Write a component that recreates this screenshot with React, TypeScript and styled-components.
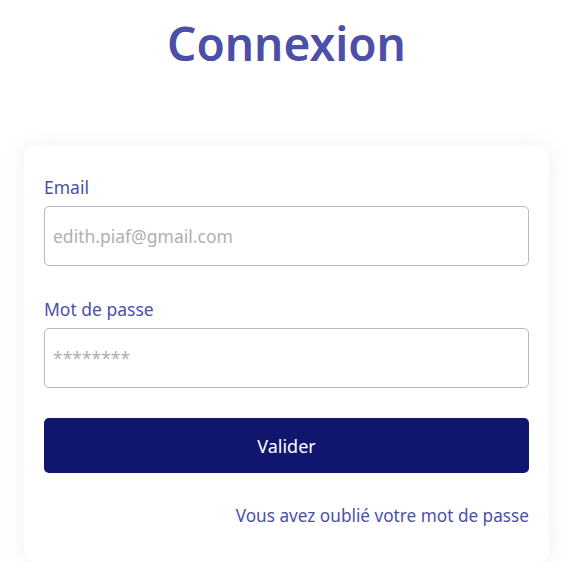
import React from 'react';
import styled, { createGlobalStyle } from 'styled-components';

const Indigo = '#4b4fa8';
const Navy = '#10156e';

const GlobalStyle = createGlobalStyle`
  body {
    margin: 0;
    background: #ffffff;
    font-family: 'Noto Sans', 'Open Sans', sans-serif;
  }
`;

const Page = styled('div')`
  box-sizing: border-box;
  display: flex;
  flex-direction: column;
  align-items: center;
  width: 573px;
  padding-top: 11px;
`;

const Title = styled('h1')`
  color: ${Indigo};
  font-size: 46px;
  font-weight: 600;
  line-height: 64px;
  margin: 0 0 70px;
`;

const Card = styled('form')`
  background: #ffffff;
  border-radius: 10px;
  box-shadow: 0 2px 22px rgba(120, 120, 210, 0.13);
  box-sizing: border-box;
  display: flex;
  flex-direction: column;
  padding: 31px 20px 34px;
  width: 525px;
`;

const Field = styled('div')`
  display: flex;
  flex-direction: column;
  gap: 8px;
  margin-bottom: ${(p: { $gap: number }) => p.$gap}px;
`;

const Label = styled('label')`
  color: ${Indigo};
  font-size: 17.5px;
  line-height: 22px;
`;

const Input = styled('input')`
  border: 1px solid #b8b8b8;
  border-radius: 5px;
  box-sizing: border-box;
  font-family: inherit;
  font-size: 17.5px;
  height: 60px;
  padding: 0 8px;
  width: 100%;

  &::placeholder {
    color: #b0b0b0;
  }
`;

const Submit = styled('button')`
  background: ${Navy};
  border: none;
  border-radius: 5px;
  color: #ffffff;
  font-family: inherit;
  font-size: 18px;
  height: 55px;
  margin-bottom: 32px;
  width: 100%;
`;

const Forgot = styled('a')`
  align-self: flex-end;
  color: ${Indigo};
  font-size: 17.2px;
  line-height: 22px;
  text-decoration: none;
`;

export default function App() {
  return (
    <>
      <GlobalStyle />
      <Page>
        <Title>Connexion</Title>
        <Card onSubmit={(e) => e.preventDefault()}>
          <Field $gap={32}>
            <Label htmlFor="email">Email</Label>
            <Input id="email" type="email" placeholder="edith.piaf@gmail.com" />
          </Field>
          <Field $gap={30}>
            <Label htmlFor="password">Mot de passe</Label>
            <Input id="password" type="password" placeholder="********" />
          </Field>
          <Submit type="submit">Valider</Submit>
          <Forgot href="#">Vous avez oublié votre mot de passe</Forgot>
        </Card>
      </Page>
    </>
  );
}
